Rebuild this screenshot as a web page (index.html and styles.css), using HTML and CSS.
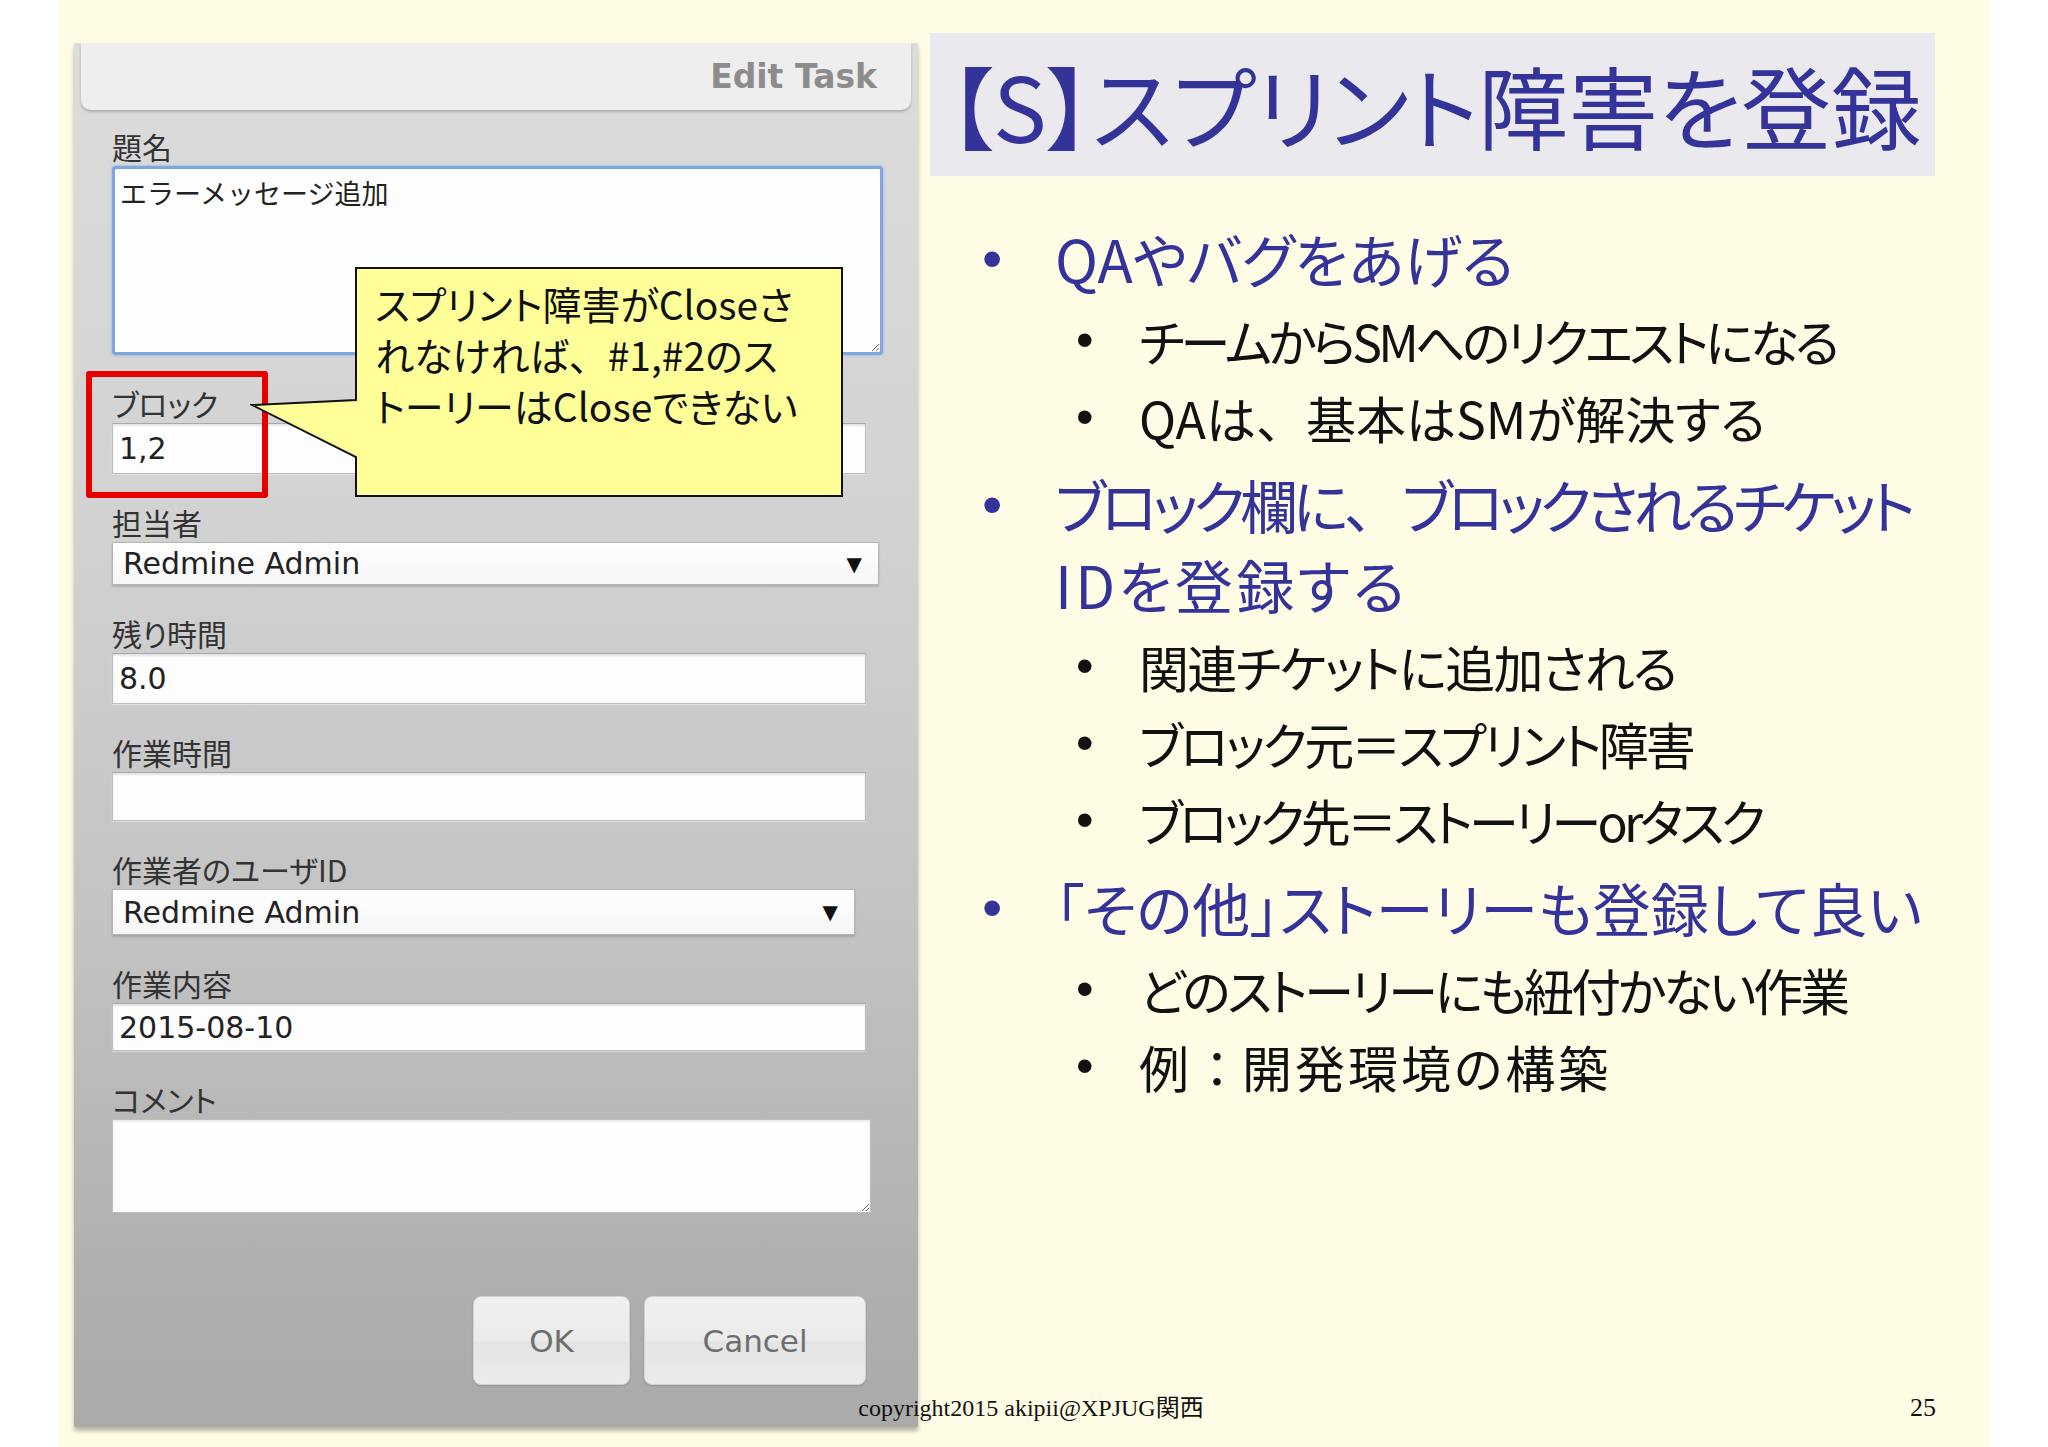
FILE: index.html
```html
<!DOCTYPE html>
<html lang="ja">
<head>
<meta charset="utf-8">
<title>【S】スプリント障害を登録</title>
<link rel="stylesheet" href="styles.css">
</head>
<body>
<div class="slide">
  <section class="dialog">
    <div class="dlg-header"><span>Edit Task</span></div>
    <form class="dlg-form">
      <div class="field first">
        <span class="label">題名</span>
        <textarea class="ta ta-title" readonly>エラーメッセージ追加</textarea>
      </div>
      <div class="field">
        <span class="label">ブロック</span>
        <div class="box inp-block">1,2</div>
      </div>
      <div class="field">
        <span class="label">担当者</span>
        <div class="box sel sel-assignee"><span>Redmine Admin</span><span class="arrow">▼</span></div>
      </div>
      <div class="field">
        <span class="label">残り時間</span>
        <div class="box inp-remaining">8.0</div>
      </div>
      <div class="field">
        <span class="label">作業時間</span>
        <div class="box inp-spent"></div>
      </div>
      <div class="field">
        <span class="label">作業者のユーザID</span>
        <div class="box sel sel-user"><span>Redmine Admin</span><span class="arrow">▼</span></div>
      </div>
      <div class="field">
        <span class="label">作業内容</span>
        <div class="box inp-date">2015-08-10</div>
      </div>
      <div class="field">
        <span class="label">コメント</span>
        <textarea class="ta ta-comment" readonly></textarea>
      </div>
      <div class="btn-row">
        <button type="button" class="btn btn-ok">OK</button>
        <button type="button" class="btn btn-cancel">Cancel</button>
      </div>
    </form>
    <div class="redbox"></div>
    <div class="callout">
      <svg class="callout-shape" width="594" height="232" viewBox="0 0 594 232">
        <path d="M106 2 H592 V230 H106 V191 L2 139 L106 134 Z" fill="#FFFF99" stroke="#111" stroke-width="2" stroke-linejoin="miter"/>
      </svg>
      <p class="callout-text">スプリント障害がCloseさ<br>れなければ<span class="fw">、</span>#1,#2のス<br>トーリーはCloseできない</p>
    </div>
  </section>

  <main class="content">
    <h1 class="title">【S】スプリント障害を登録</h1>
    <ul class="l1">
      <li>
        <div class="line1"><span class="b1">•</span><span>QAやバグをあげる</span></div>
        <ul class="l2">
          <li><span class="b2">•</span><span class="t-075">チームからSMへのリクエストになる</span></li>
          <li><span class="b2">•</span><span>QAは<span class="fw">、</span>基本はSMが解決する</span></li>
        </ul>
      </li>
      <li>
        <div class="line1"><span class="b1">•</span><span class="txt"><span class="t-087">ブロック欄に<span class="fw">、</span>ブロックされるチケット</span><br><span class="w-055">IDを登録する</span></span></div>
        <ul class="l2">
          <li><span class="b2">•</span><span class="t-035">関連チケットに追加される</span></li>
          <li><span class="b2">•</span><span class="t-058">ブロック元＝スプリント障害</span></li>
          <li><span class="b2">•</span><span class="t-075">ブロック先＝ストーリーorタスク</span></li>
        </ul>
      </li>
      <li>
        <div class="line1"><span class="b1">•</span><span>「その他」ストーリーも登録して良い</span></div>
        <ul class="l2">
          <li><span class="b2">•</span><span class="t-062">どのストーリーにも紐付かない作業</span></li>
          <li><span class="b2">•</span><span class="w-060">例<span class="fw">：</span>開発環境の構築</span></li>
        </ul>
      </li>
    </ul>
  </main>

  <footer class="footer">
    <span class="copy">copyright2015 akipii@XPJUG関西</span>
    <span class="pageno">25</span>
  </footer>
</div>
</body>
</html>
```

FILE: styles.css
```css
* { box-sizing: border-box; }

body {
  margin: 0;
  background: #ffffff;
  font-family: "Noto Sans", "Noto Sans CJK JP", sans-serif;
}

.slide {
  position: relative;
  margin-left: 58px;
  width: 1932px;
  height: 1447px;
  background: #FFFCE6;
  display: flex;
  align-items: flex-start;
  overflow: hidden;
}

/* ---------- dialog ---------- */
.dialog {
  position: relative;
  flex: none;
  margin: 43px 0 0 16px;
  width: 844px;
  height: 1384px;
  background: linear-gradient(#DCDCDC 0%, #D2D2D2 35%, #C2C2C2 65%, #B0B0B0 88%, #AAAAAB 100%);
  box-shadow: 0 4px 4px rgba(0, 0, 0, 0.28);
}

.dlg-header {
  margin: 0 7px;
  height: 67px;
  background: #EEEEEE;
  border-radius: 0 0 10px 10px;
  box-shadow: 0 2px 3px rgba(0, 0, 0, 0.2);
  display: flex;
  align-items: center;
  justify-content: flex-end;
  padding-right: 34px;
  font: bold 33px "DejaVu Sans", sans-serif;
  color: #8C8C8C;
}

.dlg-form {
  display: flex;
  flex-direction: column;
  padding-left: 38px;
}

.field {
  margin-top: 31px;
  display: flex;
  flex-direction: column;
  align-items: flex-start;
}
.field.first { margin-top: 19px; }

.label {
  height: 34px;
  margin-bottom: 3px;
  font: 30px/34px "Noto Sans CJK JP", sans-serif;
  font-feature-settings: "palt";
  color: #333333;
}

.box {
  display: flex;
  align-items: center;
  padding-left: 6px;
  background: #FDFDFD;
  border: 1px solid #BDBDBD;
  border-top-color: #A8A8A8;
  box-shadow: inset 0 2px 2px rgba(0, 0, 0, 0.10), 0 1px 1px rgba(255, 255, 255, 0.35);
  font: 30px "DejaVu Sans", "Noto Sans CJK JP", sans-serif;
  color: #222222;
  width: 754px;
}

.inp-block { height: 51px; }
.inp-remaining { height: 51px; }
.inp-spent { height: 49px; }
.inp-date { height: 48px; }

.sel {
  justify-content: space-between;
  padding: 0 16px 0 10px;
  background: linear-gradient(#FFFFFF, #F6F6F6);
  border-color: #B5B5B5;
  box-shadow: 0 2px 2px rgba(0, 0, 0, 0.15);
}
.sel-assignee { width: 767px; height: 43px; }
.sel-user { width: 743px; height: 46px; }

.arrow {
  font: 20px "DejaVu Sans", sans-serif;
  color: #111111;
}

.ta {
  display: block;
  resize: both;
  margin: 0;
  background: #FEFEFE;
  font: 27px/35px "Noto Sans CJK JP", sans-serif;
  color: #222222;
  outline: none;
}
.ta-title {
  width: 771px;
  height: 189px;
  padding: 6px 5px;
  border: 3px solid #7FA6DE;
  border-radius: 4px;
  box-shadow: 0 0 3px rgba(90, 140, 220, 0.6);
}
.ta-comment {
  width: 759px;
  height: 94px;
  padding: 6px;
  border: 1px solid #BDBDBD;
  box-shadow: inset 0 2px 2px rgba(0, 0, 0, 0.08);
}

.btn-row {
  margin-top: 83px;
  width: 754px;
  display: flex;
  justify-content: flex-end;
  gap: 14px;
}
.btn {
  height: 89px;
  border: 1px solid #D2D2D2;
  border-radius: 8px;
  background: linear-gradient(#F0F0F0 0%, #EBEBEB 50%, #E4E4E4 52%, #ECECEC 100%);
  font: 31px "DejaVu Sans", sans-serif;
  color: #6E6E6E;
  box-shadow: 0 1px 2px rgba(0, 0, 0, 0.15);
}
.btn-ok { width: 157px; }
.btn-cancel { width: 222px; }

/* overlays on the dialog */
.redbox {
  position: absolute;
  left: 12px;
  top: 328px;
  width: 182px;
  height: 127px;
  border: 6px solid #E60000;
  border-radius: 3px;
}

.callout {
  position: absolute;
  left: 176px;
  top: 223px;
  width: 594px;
  height: 232px;
}
.callout-shape {
  position: absolute;
  left: 0;
  top: 0;
}
.callout-text {
  position: relative;
  margin: 0;
  padding: 12px 0 0 125px;
  font: 39px/51px "Noto Sans CJK JP", sans-serif;
  font-feature-settings: "palt";
  color: #111111;
  white-space: nowrap;
}

.fw { font-feature-settings: normal; letter-spacing: 0; }

/* ---------- right content ---------- */
.content {
  flex: none;
  margin: 33px 0 0 12px;
  width: 1005px;
}

.title {
  margin: 0;
  height: 143px;
  padding-left: 18px;
  background: #E9E9EE;
  font: 400 90px/143px "Noto Sans CJK JP", sans-serif;
  font-feature-settings: "palt";
  color: #333399;
  white-space: nowrap;
}

.l1, .l2 {
  list-style: none;
  margin: 0;
  padding: 0;
}

.l1 > li { margin-top: 8px; }
.l1 > li:first-child { margin-top: 42px; }

.line1 {
  display: flex;
  font: 58px/80px "Noto Sans CJK JP", sans-serif;
  font-feature-settings: "palt";
  color: #333399;
  white-space: nowrap;
}
.b1 {
  flex: none;
  width: 125px;
  padding-left: 52px;
  font-family: "Liberation Sans", sans-serif;
}

.l2 { margin-top: 4px; }
.l2 > li {
  display: flex;
  font: 50px/77px "Noto Sans CJK JP", sans-serif;
  font-feature-settings: "palt";
  color: #111111;
  white-space: nowrap;
}
.b2 {
  flex: none;
  width: 209px;
  padding-left: 146px;
  font-family: "Liberation Sans", sans-serif;
}

/* per-line tracking to follow the narrow kana of the original slide font */
.t-087 { letter-spacing: -0.087em; }
.t-075 { letter-spacing: -0.075em; }
.t-062 { letter-spacing: -0.062em; }
.t-058 { letter-spacing: -0.058em; }
.t-035 { letter-spacing: -0.035em; }
.w-055 { letter-spacing: 0.055em; }
.w-060 { letter-spacing: 0.06em; }

/* ---------- footer ---------- */
.footer {
  position: absolute;
  left: 0;
  right: 0;
  bottom: 24px;
  height: 30px;
  padding-left: 14px;
  text-align: center;
  font: 24px/30px "Liberation Serif", "Noto Sans CJK JP", serif;
  color: #111111;
}
.pageno {
  position: absolute;
  right: 54px;
  top: 0;
  font-size: 26px;
}
```
